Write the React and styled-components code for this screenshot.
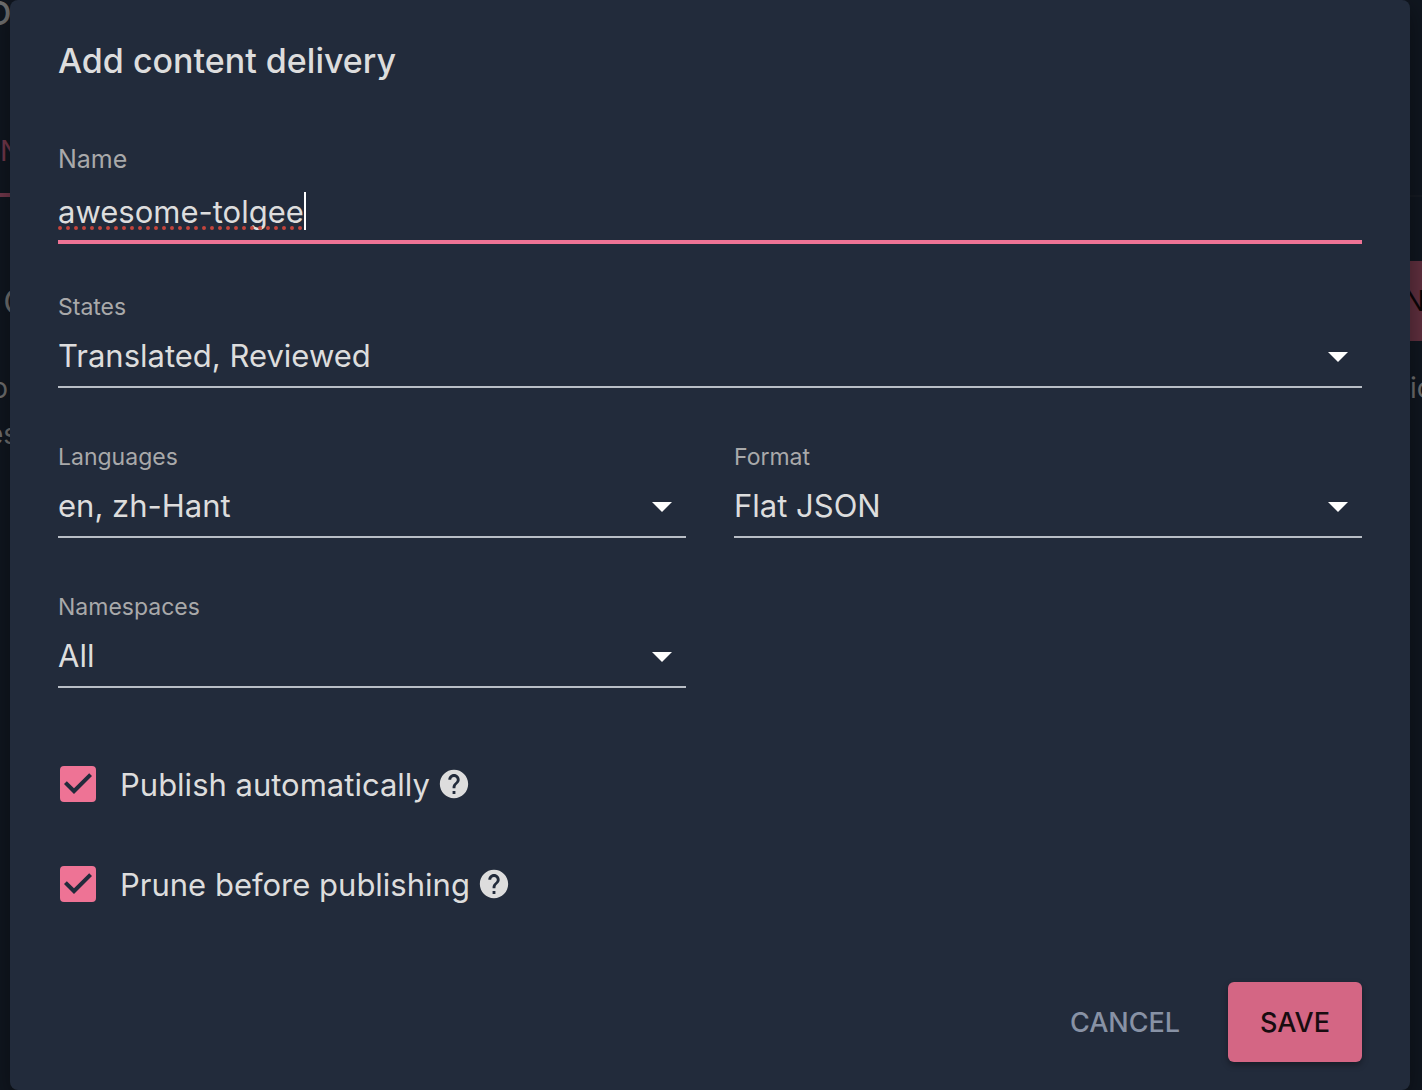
import { useState } from 'react'
import styled, { createGlobalStyle } from 'styled-components'

const GlobalStyle = createGlobalStyle`
  * {
    box-sizing: border-box;
  }
  body {
    margin: 0;
    background: #10161f;
    color: #dddddd;
    font-family: Inter, "Liberation Sans", sans-serif;
  }
  button, input, select {
    font-family: inherit;
  }
`

const Page = styled.div`
  display: grid;
  min-height: 100vh;
  overflow: hidden;
`

const Background = styled.div`
  grid-area: 1 / 1;
  color: #6e6e6e;
`

const BackgroundRow = styled.div`
  display: flex;
  justify-content: space-between;
  align-items: ${props => props.$line ? 'flex-start' : 'center'};
  height: ${props => props.$height}px;
  font-size: ${props => props.$size || 28}px;
  border-bottom: ${props => props.$line ? '2px solid #151a22' : 'none'};
`

const LeftText = styled.span`
  display: flex;
  flex-shrink: 0;
  justify-content: flex-end;
  width: ${props => props.$width}px;
`

const RightText = styled.span`
  width: 12px;
`

const Tab = styled.div`
  width: 10px;
  height: 92px;
  padding-top: 30px;
  line-height: 32px;
  color: #70374a;
  border-bottom: 4px solid #70374a;
`

const AddButton = styled.button`
  width: 18px;
  height: 80px;
  padding: 0;
  border: none;
  background: #5f2f3e;
  color: #0b0507;
  font-size: 28px;
  text-align: left;
`

const Dialog = styled.form`
  grid-area: 1 / 1;
  z-index: 1;
  margin: 0 12px 0 10px;
  padding: 37px 48px 28px;
  border-radius: 8px;
  background: #222b3b;
  box-shadow: 0 8px 24px rgba(0, 0, 0, 0.4);
`

const Title = styled.h2`
  margin: 0;
  font-size: 34px;
  font-weight: 500;
  line-height: 48px;
`

const Fields = styled.div`
  display: grid;
  grid-template-columns: 1fr 1fr;
  column-gap: 48px;
  margin-top: 57px;
`

const Field = styled.div`
  display: flex;
  flex-direction: column;
  grid-column: ${props => props.$wide ? '1 / -1' : 'auto'};
  height: ${props => props.$first ? 148 : 150}px;
`

const Label = styled.label`
  color: #a9a9aa;
  font-size: ${props => props.$large ? 25 : 23}px;
  line-height: 34px;
`

const InputWrap = styled.div`
  position: relative;
  height: 68px;
  border-bottom: 4px solid #ee7395;
`

const TextInput = styled.input`
  width: 100%;
  height: 64px;
  padding: 6px 0 0;
  border: none;
  outline: none;
  background: none;
  color: #dddddd;
  font-size: 31px;
`

// sits over the input to carry the caret and the spelling dots
const Typed = styled.span`
  position: absolute;
  top: 16px;
  left: 0;
  height: 38px;
  border-right: 2px solid #ffffff;
  color: transparent;
  font-size: 31px;
  line-height: 38px;
  pointer-events: none;
`

const SpellMark = styled.svg`
  position: absolute;
  left: 0;
  bottom: 0;
  width: 100%;
  height: 4px;
`

const SelectWrap = styled.div`
  display: flex;
  align-items: center;
  height: 64px;
  border-bottom: 2px solid #b9bec6;
`

const Select = styled.select`
  flex: 1;
  height: 62px;
  margin-right: -48px;
  padding: 0 48px 0 0;
  border: none;
  outline: none;
  appearance: none;
  background: none;
  color: #dddddd;
  font-size: 31px;
`

const Arrow = styled.svg`
  width: 48px;
  height: 48px;
  pointer-events: none;
`

const Options = styled.div`
  display: flex;
  flex-direction: column;
  gap: 52px;
  margin-top: 20px;
`

const Option = styled.div`
  display: flex;
  align-items: center;
  height: 48px;
  font-size: 31px;
`

const CheckWrap = styled.span`
  display: grid;
  width: 40px;
  margin-right: 22px;
`

const Checkbox = styled.input`
  grid-area: 1 / 1;
  appearance: none;
  width: 36px;
  height: 36px;
  margin: 0 2px;
  border: 4px solid #ee7395;
  border-radius: 4px;
  &:checked {
    background: #ee7395;
  }
`

const CheckMark = styled.svg`
  grid-area: 1 / 1;
  width: 36px;
  height: 36px;
  margin: 0 2px;
  pointer-events: none;
`

const Help = styled.svg`
  width: 34px;
  height: 34px;
  margin-left: 7px;
`

const Actions = styled.div`
  display: flex;
  justify-content: flex-end;
  gap: 16px;
  margin-top: 74px;
`

const Button = styled.button`
  height: 80px;
  padding: 0 32px;
  border: none;
  border-radius: 6px;
  background: ${props => props.$primary ? '#d46684' : 'none'};
  box-shadow: ${props => props.$primary ? '0 3px 6px rgba(0, 0, 0, 0.35)' : 'none'};
  color: ${props => props.$primary ? '#180c10' : '#8892a5'};
  font-size: 27px;
  font-weight: 500;
`

const SelectField = ({ id, label, value, wide }) => (
  <Field $wide={wide}>
    <Label htmlFor={id}>{label}</Label>
    <SelectWrap>
      <Select id={id} defaultValue={value}>
        <option>{value}</option>
      </Select>
      <Arrow viewBox="0 0 24 24" fill="#ffffff">
        <path d="M7 10.5l5 5 5-5z" />
      </Arrow>
    </SelectWrap>
  </Field>
)

const CheckOption = ({ id, label }) => {
  const [checked, setChecked] = useState(true)
  return (
    <Option>
      <CheckWrap>
        <Checkbox id={id} type="checkbox" checked={checked} onChange={e => setChecked(e.target.checked)} />
        {checked && (
          <CheckMark viewBox="3 3 18 18" fill="#222b3b">
            <path d="M10 17l-5-5 1.41-1.41L10 14.17l7.59-7.59L19 8l-9 9z" />
          </CheckMark>
        )}
      </CheckWrap>
      <label htmlFor={id}>{label}</label>
      <Help viewBox="0 0 24 24" fill="#dddddd">
        <path d="M12 2C6.48 2 2 6.48 2 12s4.48 10 10 10 10-4.48 10-10S17.52 2 12 2zm1 17h-2v-2h2v2zm2.07-7.75l-.9.92C13.45 12.9 13 13.5 13 15h-2v-.5c0-1.1.45-2.1 1.17-2.83l1.24-1.26c.37-.36.59-.86.59-1.41 0-1.1-.9-2-2-2s-2 .9-2 2H8c0-2.21 1.79-4 4-4s4 1.79 4 4c0 .88-.36 1.68-.93 2.25z" />
      </Help>
    </Option>
  )
}

const App = () => {
  const [name, setName] = useState('awesome-tolgee')

  return (
    <Page>
      <GlobalStyle />
      <Background>
        <BackgroundRow $height={18} $size={44}>
          <LeftText $width={12}>o</LeftText>
        </BackgroundRow>
        <BackgroundRow $height={87} />
        <BackgroundRow $height={92} $line>
          <Tab>N</Tab>
        </BackgroundRow>
        <BackgroundRow $height={64} />
        <BackgroundRow $height={80} $size={34}>
          <LeftText $width={28}>C</LeftText>
          <AddButton type="button" tabIndex={-1}>N</AddButton>
        </BackgroundRow>
        <BackgroundRow $height={24} />
        <BackgroundRow $height={46}>
          <LeftText $width={8}>o</LeftText>
          <RightText>ic</RightText>
        </BackgroundRow>
        <BackgroundRow $height={46}>
          <LeftText $width={18}>es</LeftText>
        </BackgroundRow>
      </Background>
      <Dialog onSubmit={e => e.preventDefault()}>
        <Title>Add content delivery</Title>
        <Fields>
          <Field $wide $first>
            <Label htmlFor="name" $large>Name</Label>
            <InputWrap>
              <TextInput id="name" value={name} spellCheck={false} onChange={e => setName(e.target.value)} />
              <Typed aria-hidden="true">
                {name}
                <SpellMark>
                  <line x1="2" y1="2" x2="100%" y2="2" stroke="#c4453d" strokeWidth="4" strokeLinecap="round" strokeDasharray="0 8" />
                </SpellMark>
              </Typed>
            </InputWrap>
          </Field>
          <SelectField id="states" label="States" value="Translated, Reviewed" wide />
          <SelectField id="languages" label="Languages" value="en, zh-Hant" />
          <SelectField id="format" label="Format" value="Flat JSON" />
          <SelectField id="namespaces" label="Namespaces" value="All" />
        </Fields>
        <Options>
          <CheckOption id="publish" label="Publish automatically" />
          <CheckOption id="prune" label="Prune before publishing" />
        </Options>
        <Actions>
          <Button type="button">CANCEL</Button>
          <Button type="submit" $primary>SAVE</Button>
        </Actions>
      </Dialog>
    </Page>
  )
}

export default App
